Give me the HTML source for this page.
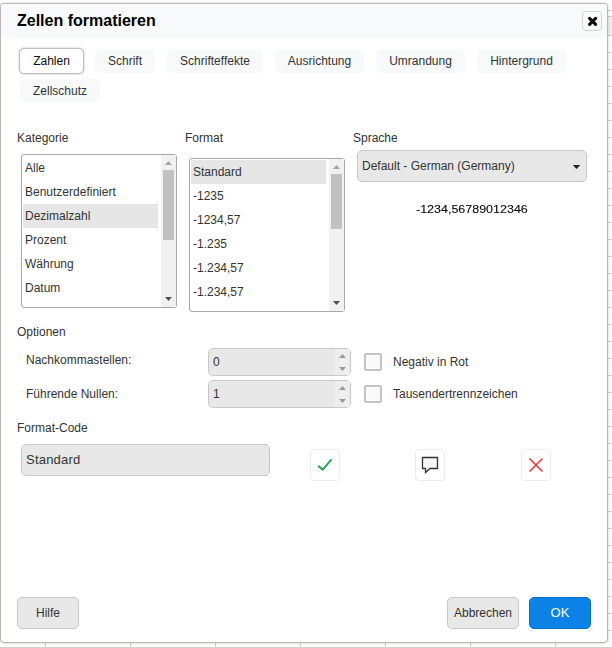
<!DOCTYPE html>
<html><head><meta charset="utf-8">
<style>
*{box-sizing:border-box;margin:0;padding:0}
html,body{width:612px;height:648px;overflow:hidden;background:#fff;font-family:"Liberation Sans",sans-serif;color:#333}
.a{position:absolute}
.t{position:absolute;white-space:pre;font-size:12px;line-height:14px}
#grid{position:absolute;left:0;top:0;width:612px;height:648px;background:#fff}
#dlg{position:absolute;left:0;top:3px;width:608px;height:640px;border:1px solid #bab7b2;border-radius:4px;background:#fff;box-shadow:0 0 3px rgba(50,40,30,.25);overflow:hidden}
#hdr{position:absolute;left:0;top:0;width:606px;height:34px;background:#f8f9fa}
.tab{position:absolute;height:24px;background:#f8f9fa;border-radius:5px;font-size:12px;line-height:24px;text-align:center;color:#333}
.tab.act{color:#0d0d0d;background:#fff;border:1px solid #bdbdbd;box-shadow:0 0 2px rgba(0,0,0,.3);line-height:24px}
.box{position:absolute;border:1px solid #a8a8a8;border-radius:3px;background:#fff}
.inp{position:absolute;border:1px solid #c8c8c8;border-radius:5px;background:#e8e8e8}
.btn{position:absolute;border:1px solid #c8c8c8;border-radius:5px;background:#e8e8e8;font-size:12px;text-align:center;color:#333}
.ib{position:absolute;border:1px solid #ececec;border-radius:4px;background:#fff}
.cb{position:absolute;width:18px;height:18px;border:2px solid #c4c4c4;border-radius:2px;background:#fafafa}
</style></head><body>
<svg id="grid" width="612" height="648"><rect x="0" y="17" width="612" height="18" fill="#efefef"/><path d="M0 10.5H612M0 16.5H612" stroke="#d0d0d0"/><path d="M0 35.5H612M0 52.5H612M0 69.5H612M0 86.5H612M0 103.5H612M0 120.5H612M0 137.5H612M0 154.5H612M0 171.5H612M0 188.5H612M0 205.5H612M0 222.5H612M0 239.5H612M0 256.5H612M0 273.5H612M0 290.5H612M0 307.5H612M0 324.5H612M0 341.5H612M0 358.5H612M0 375.5H612M0 392.5H612M0 409.5H612M0 426.5H612M0 443.5H612M0 460.5H612M0 477.5H612M0 494.5H612M0 511.5H612M0 528.5H612M0 545.5H612M0 562.5H612M0 579.5H612M0 596.5H612M0 613.5H612M0 630.5H612M0 647.5H612M45.5 35V648M130.5 35V648M215.5 35V648M300.5 35V648M385.5 35V648M470.5 35V648M555.5 35V648M640.5 35V648" stroke="#cfcfcf" fill="none"/></svg>
<div id="dlg">
  <div id="hdr"></div>
</div>
<!-- title -->
<div class="t" style="left:17px;top:12px;font-size:16px;line-height:18px;font-weight:bold;color:#000">Zellen formatieren</div>
<!-- close -->
<div class="a" style="left:582px;top:11px;width:20px;height:20px;border:1px solid #d5d5d5;border-radius:4px;background:#fafafa"></div>
<svg class="a" style="left:582px;top:11px" width="20" height="20"><path d="M7.6 7.4 L13.6 13.4 M13.6 7.4 L7.6 13.4" stroke="#111" stroke-width="3.2" stroke-linecap="round"/></svg>

<!-- tabs -->
<div class="tab act" style="left:19px;top:48px;width:65px;height:26px">Zahlen</div>
<div class="tab" style="left:95px;top:49px;width:60px">Schrift</div>
<div class="tab" style="left:167px;top:49px;width:96px">Schrifteffekte</div>
<div class="tab" style="left:275px;top:49px;width:89px">Ausrichtung</div>
<div class="tab" style="left:376px;top:49px;width:89px">Umrandung</div>
<div class="tab" style="left:477px;top:49px;width:89px">Hintergrund</div>
<div class="tab" style="left:20px;top:79px;width:80px">Zellschutz</div>

<!-- labels -->
<div class="t" style="left:17px;top:131px">Kategorie</div>
<div class="t" style="left:185px;top:131px">Format</div>
<div class="t" style="left:353px;top:131px">Sprache</div>

<!-- Kategorie list -->
<div class="box" style="left:21px;top:154px;width:156px;height:154px"></div>
<div class="a" style="left:23px;top:204px;width:135px;height:24px;background:#e6e6e6"></div>
<div class="t" style="left:25px;top:161px">Alle</div>
<div class="t" style="left:25px;top:185px">Benutzerdefiniert</div>
<div class="t" style="left:25px;top:209px">Dezimalzahl</div>
<div class="t" style="left:25px;top:233px">Prozent</div>
<div class="t" style="left:25px;top:257px">Währung</div>
<div class="t" style="left:25px;top:281px">Datum</div>
<div class="a" style="left:161px;top:155px;width:15px;height:152px;background:#f1f1f1"></div>
<div class="a" style="left:163px;top:170px;width:11px;height:70px;background:#c1c1c1"></div>
<svg class="a" style="left:161px;top:155px" width="15" height="152"><path d="M4 10 L11 10 L7.5 6 Z" fill="#a3a3a3"/><path d="M4 142 L11 142 L7.5 146 Z" fill="#505050"/></svg>

<!-- Format list -->
<div class="box" style="left:189px;top:158px;width:156px;height:154px"></div>
<div class="a" style="left:191px;top:160px;width:135px;height:24px;background:#e6e6e6"></div>
<div class="t" style="left:193px;top:165px">Standard</div>
<div class="t" style="left:193px;top:189px">-1235</div>
<div class="t" style="left:193px;top:213px">-1234,57</div>
<div class="t" style="left:193px;top:237px">-1.235</div>
<div class="t" style="left:193px;top:261px">-1.234,57</div>
<div class="t" style="left:193px;top:285px">-1.234,57</div>
<div class="a" style="left:329px;top:159px;width:15px;height:152px;background:#f1f1f1"></div>
<div class="a" style="left:331px;top:174px;width:11px;height:55px;background:#c1c1c1"></div>
<svg class="a" style="left:329px;top:159px" width="15" height="152"><path d="M4 10 L11 10 L7.5 6 Z" fill="#a3a3a3"/><path d="M4 142 L11 142 L7.5 146 Z" fill="#505050"/></svg>

<!-- Sprache dropdown -->
<div class="inp" style="left:357px;top:150px;width:230px;height:32px"></div>
<div class="t" style="left:362px;top:159px">Default - German (Germany)</div>
<svg class="a" style="left:572px;top:164px" width="10" height="6"><path d="M0.8 1 L8.2 1 L4.5 5 Z" fill="#222"/></svg>
<div class="t" style="left:416px;top:202px;color:#000;font-size:11px;line-height:14px;transform:scaleX(1.135);transform-origin:0 0;-webkit-text-stroke:0.08px #000;will-change:transform">-1234,56789012346</div>

<!-- Optionen -->
<div class="t" style="left:17px;top:325px">Optionen</div>
<div class="t" style="left:26px;top:353px">Nachkommastellen:</div>
<div class="t" style="left:26px;top:387px">Führende Nullen:</div>
<div class="inp" style="left:208px;top:348px;width:143px;height:28px"></div>
<div class="a" style="left:335px;top:349px;width:15px;height:26px;background:#eeeeee;border-radius:0 3px 3px 0"></div>
<div class="t" style="left:213px;top:355px">0</div>
<svg class="a" style="left:335px;top:349px" width="15" height="26"><path d="M4 9 L11 9 L7.5 5 Z" fill="#9a9a9a"/><path d="M4 18 L11 18 L7.5 22 Z" fill="#9a9a9a"/></svg>
<div class="inp" style="left:208px;top:380px;width:143px;height:28px"></div>
<div class="a" style="left:335px;top:381px;width:15px;height:26px;background:#eeeeee;border-radius:0 3px 3px 0"></div>
<div class="t" style="left:213px;top:387px">1</div>
<svg class="a" style="left:335px;top:381px" width="15" height="26"><path d="M4 9 L11 9 L7.5 5 Z" fill="#9a9a9a"/><path d="M4 18 L11 18 L7.5 22 Z" fill="#9a9a9a"/></svg>
<div class="cb" style="left:364px;top:353px"></div>
<div class="cb" style="left:364px;top:385px"></div>
<div class="t" style="left:393px;top:355px">Negativ in Rot</div>
<div class="t" style="left:393px;top:387px">Tausendertrennzeichen</div>

<!-- Format-Code -->
<div class="t" style="left:17px;top:421px">Format-Code</div>
<div class="inp" style="left:21px;top:444px;width:249px;height:32px"></div>
<div class="t" style="left:26px;top:453px;font-size:13px;letter-spacing:0.22px">Standard</div>
<div class="ib" style="left:310px;top:449px;width:30px;height:32px"></div>
<svg class="a" style="left:310px;top:449px" width="30" height="32"><path d="M8.8 17.3 L12.7 20.7 L21.1 10.9" fill="none" stroke="#1ca650" stroke-width="1.9" stroke-linecap="round" stroke-linejoin="round"/></svg>
<div class="ib" style="left:415px;top:449px;width:30px;height:32px"></div>
<svg class="a" style="left:415px;top:449px" width="30" height="32"><path d="M7.5 8.5 H22.5 V19.5 H15 L10.5 23.5 V19.5 H7.5 Z" fill="#f5f5f5" stroke="#333" stroke-width="1.3"/></svg>
<div class="ib" style="left:521px;top:449px;width:30px;height:32px"></div>
<svg class="a" style="left:521px;top:449px" width="30" height="32"><path d="M8.5 9.5 L21.5 22.5 M21.5 9.5 L8.5 22.5" stroke="#e8333a" stroke-width="1.5"/></svg>

<!-- bottom buttons -->
<div class="btn" style="left:17px;top:597px;width:62px;height:32px;line-height:30px">Hilfe</div>
<div class="btn" style="left:447px;top:597px;width:72px;height:32px;line-height:30px">Abbrechen</div>
<div class="btn" style="left:529px;top:597px;width:62px;height:32px;line-height:30px;background:#0b82e6;border-color:#0a6fc7;color:#fff;font-size:13px">OK</div>
</body></html>
